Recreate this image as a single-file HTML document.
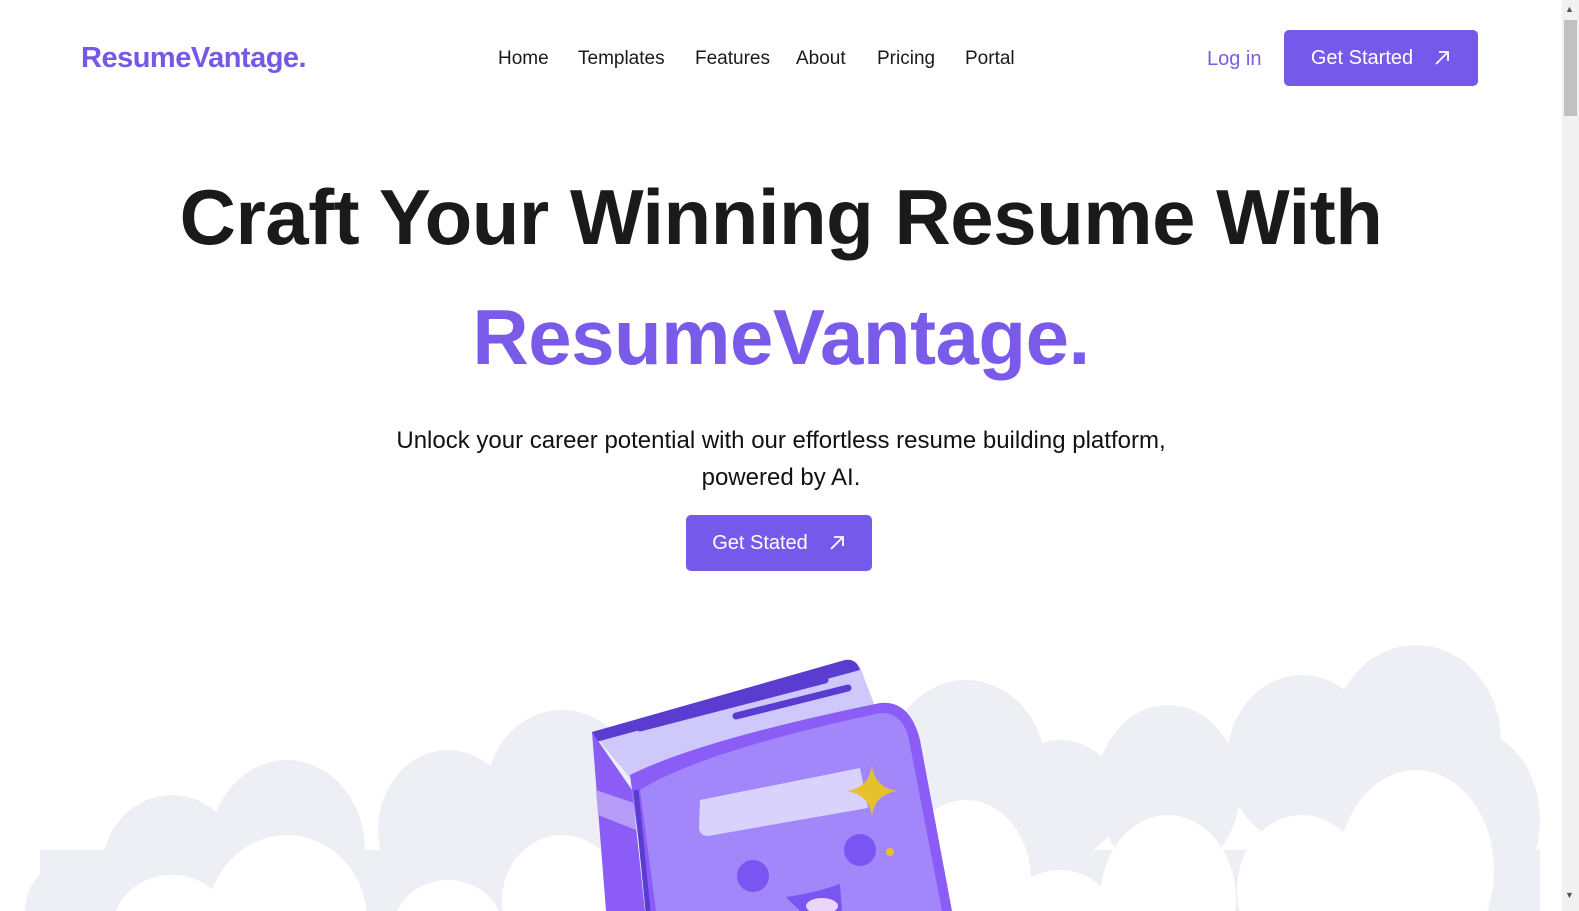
<!DOCTYPE html>
<html><head><meta charset="utf-8"><style>
*{margin:0;padding:0;box-sizing:border-box}
html,body{width:1579px;height:911px;overflow:hidden}
body{background:#fff;font-family:"Liberation Sans",sans-serif;position:relative}
.abs{position:absolute;white-space:nowrap}
.logo{left:81px;top:42px;font-size:29px;color:#7558e6;font-weight:bold;letter-spacing:-0.5px}
.nav{top:48px;font-size:19px;color:#1a1a1a}
.btn{background:#7559ea;color:#fff;border-radius:5px;font-size:20px;display:flex;align-items:center;justify-content:center;gap:20px}
h1{position:absolute;left:0;width:1562px;text-align:center;font-size:78px;font-weight:bold;color:#1a1a1a;letter-spacing:-0.5px;white-space:nowrap}
.sb{position:absolute;left:1562px;top:0;width:17px;height:911px;background:#f1f1f1}
.thumb{position:absolute;left:1564px;top:20px;width:13px;height:96px;background:#c1c1c1}
</style></head><body>
<div class="abs logo">ResumeVantage.</div>
<div class="abs nav" style="left:498px">Home</div>
<div class="abs nav" style="left:578px">Templates</div>
<div class="abs nav" style="left:695px">Features</div>
<div class="abs nav" style="left:796px">About</div>
<div class="abs nav" style="left:877px">Pricing</div>
<div class="abs nav" style="left:965px">Portal</div>
<div class="abs nav" style="left:1207px;color:#7a5ee0;font-size:20px">Log in</div>
<div class="abs btn" style="left:1284px;top:30px;width:194px;height:56px">Get Started <svg width="18" height="18" viewBox="0 0 18 18"><path d="M3 15L15 3M6 3h9v9" stroke="#fff" stroke-width="1.8" fill="none"/></svg></div>
<h1 style="top:172px">Craft Your Winning Resume With</h1>
<h1 style="top:292px;color:#7a5be9">ResumeVantage.</h1>
<div class="abs" style="left:0;width:1562px;top:422px;text-align:center;font-size:24px;line-height:37px;color:#111;white-space:normal">Unlock your career potential with our effortless resume building platform,<br>powered by AI.</div>
<div class="abs btn" style="left:686px;top:515px;width:186px;height:56px">Get Stated <svg width="18" height="18" viewBox="0 0 18 18"><path d="M3 15L15 3M6 3h9v9" stroke="#fff" stroke-width="1.8" fill="none"/></svg></div>
<svg class="abs" style="left:0;top:0" width="1562" height="911">
<g fill="#edeff5">
<ellipse cx="100" cy="910" rx="75" ry="60"/>
<ellipse cx="172" cy="870" rx="70" ry="75"/>
<ellipse cx="287" cy="850" rx="78" ry="90"/>
<ellipse cx="448" cy="830" rx="70" ry="80"/>
<ellipse cx="562" cy="790" rx="75" ry="80"/>
<ellipse cx="760" cy="840" rx="200" ry="90"/>
<ellipse cx="966" cy="770" rx="80" ry="90"/>
<ellipse cx="1060" cy="800" rx="60" ry="60"/>
<ellipse cx="1168" cy="790" rx="72" ry="85"/>
<ellipse cx="1302" cy="760" rx="75" ry="85"/>
<ellipse cx="1416" cy="740" rx="85" ry="95"/>
<ellipse cx="1470" cy="820" rx="70" ry="90"/>
<rect x="40" y="850" width="1500" height="61"/>
</g>
<g fill="#fff">
<ellipse cx="172" cy="930" rx="60" ry="55"/>
<ellipse cx="287" cy="920" rx="80" ry="85"/>
<ellipse cx="448" cy="930" rx="55" ry="50"/>
<ellipse cx="562" cy="900" rx="60" ry="65"/>
<ellipse cx="966" cy="880" rx="65" ry="80"/>
<ellipse cx="1060" cy="920" rx="55" ry="50"/>
<ellipse cx="1168" cy="900" rx="68" ry="85"/>
<ellipse cx="1302" cy="890" rx="65" ry="75"/>
<ellipse cx="1416" cy="870" rx="78" ry="100"/>
</g>
<path d="M592 732 L848 660 Q858 660 862 672 L880 720 L640 790 Z" fill="#cfc8fb"/>
<path d="M592 732 L845 660 Q856 658 860 670 L596 742 Z" fill="#5a3dd0"/>
<path d="M640 728 L825 680" stroke="#5a3dd0" stroke-width="7" stroke-linecap="round"/>
<path d="M736 716 L848 688" stroke="#5a3dd0" stroke-width="7" stroke-linecap="round"/>
<path d="M592 732 L632 790 L645 911 L606 911 Z" fill="#8b5cf6"/>
<path d="M596 790 L634 803 L636 830 L598 815 Z" fill="#b79cf7"/>
<path d="M630 775 Q700 740 880 703 Q910 700 920 740 L952 911 L648 911 L632 790 Z" fill="#8b5cf6"/>
<path d="M640 790 Q700 752 880 713 Q905 712 910 745 L942 911 L656 911 Z" fill="#a287fb"/>
<path d="M636 790 L648 911" stroke="#5a3dd0" stroke-width="5"/>
<path d="M700 800 L860 768 L868 808 L708 836 Q700 836 699 828 Z" fill="#d8d2fd"/>
<path d="M872 765 Q874 787 897 791 Q874 795 872 817 Q870 795 847 791 Q870 787 872 765 Z" fill="#e6c02d"/>
<circle cx="890" cy="852" r="4" fill="#e6c02d"/>
<circle cx="860" cy="850" r="16" fill="#7a55f2"/>
<circle cx="753" cy="876" r="16" fill="#7a55f2"/>
<path d="M786 897 Q815 893 840 884 L842 911 L800 911 Z" fill="#7a55f2"/>
<ellipse cx="822" cy="906" rx="16" ry="8" fill="#ecd5fb"/>
</svg>
<div class="sb"></div><div class="thumb"></div>
<div class="abs" style="left:1565px;top:890px;font-size:9px;color:#555">▼</div>
<div class="abs" style="left:1565px;top:4px;font-size:9px;color:#555">▲</div>
</body></html>
